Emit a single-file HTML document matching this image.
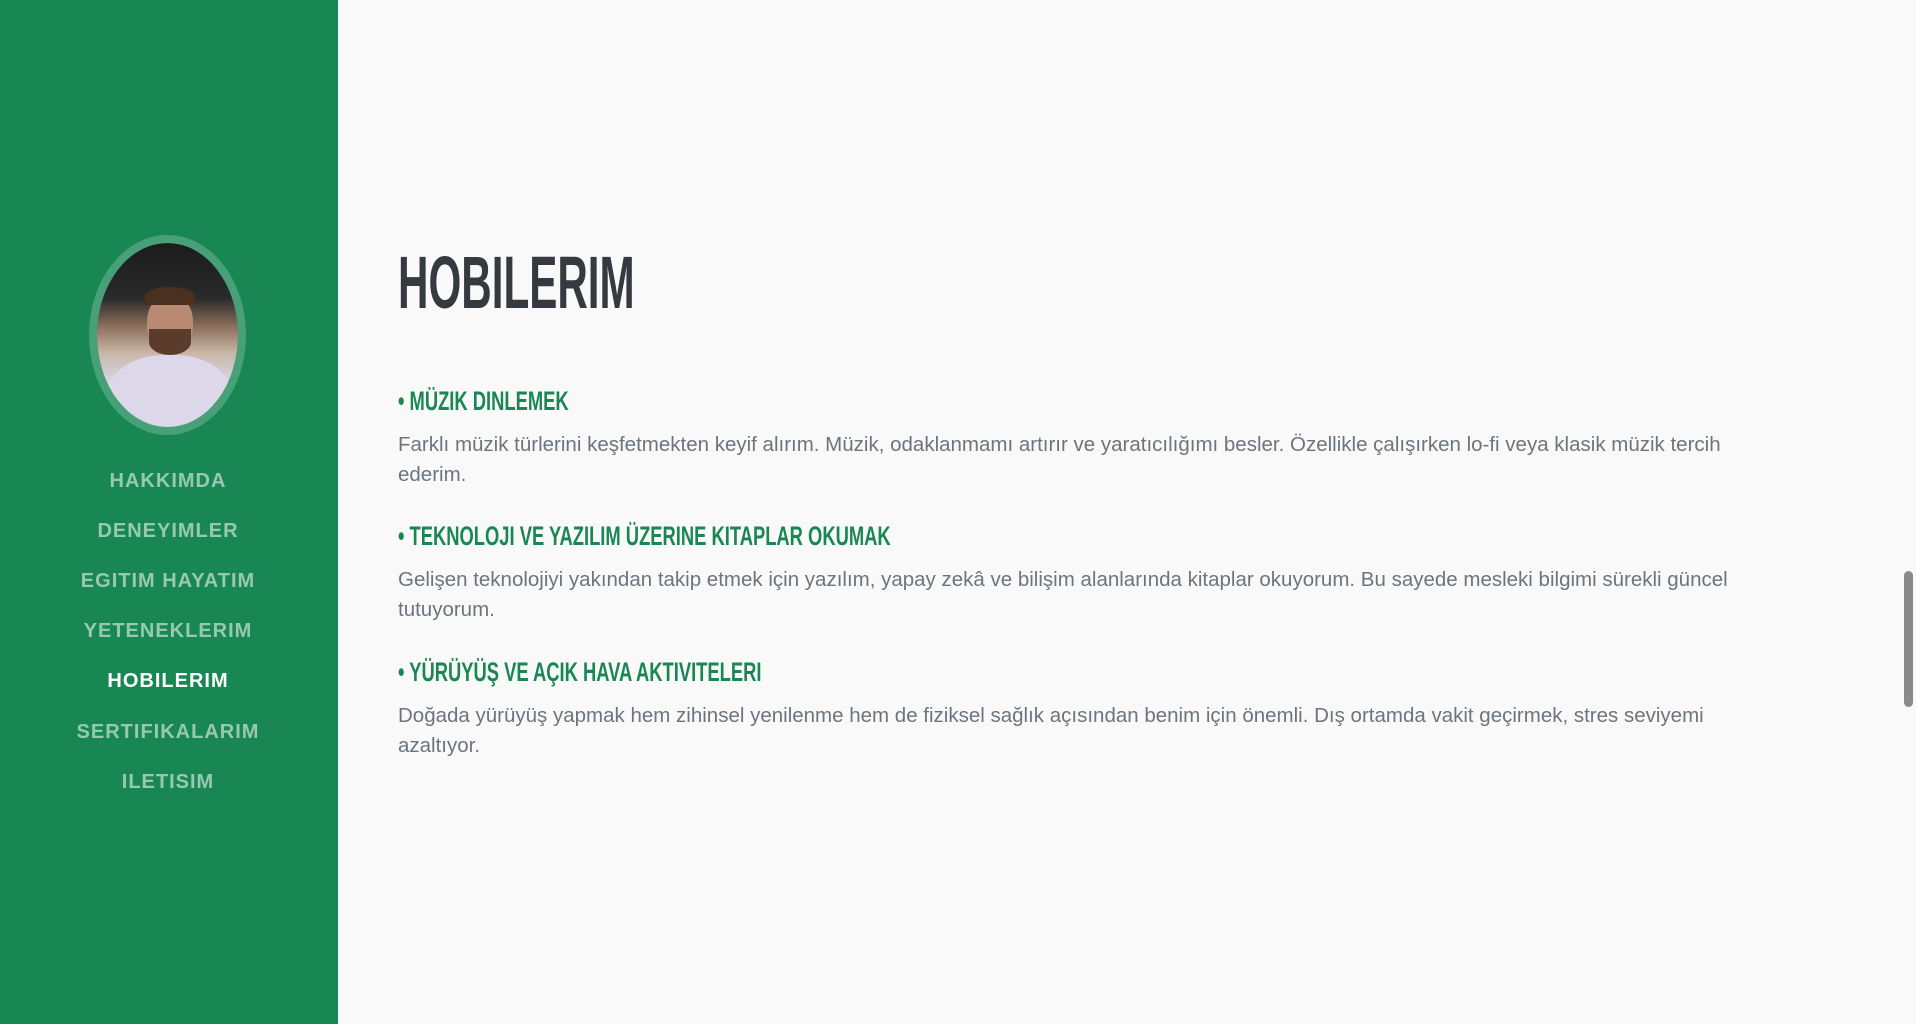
<!DOCTYPE html>
<html><head><meta charset="utf-8"><style>
html,body{margin:0;padding:0;width:1916px;height:1024px;overflow:hidden;background:#f9f9f9;font-family:"Liberation Sans",sans-serif}
.side{position:absolute;left:0;top:0;width:338px;height:1024px;background:#198754}
.ph{position:absolute;left:89px;top:235px;width:141px;height:184px;border:8px solid #47a077;border-radius:50%;overflow:hidden;background:linear-gradient(180deg,#1c1c1c 0%,#2a2a2a 30%,#8a6d5a 45%,#c9b8a8 60%,#d8d4e4 75%,#cfcfe0 100%);background-clip:padding-box}
.face{position:absolute;left:50px;top:52px;width:46px;height:58px;border-radius:45%;background:#b98a72}
.beard{position:absolute;left:52px;top:86px;width:42px;height:26px;border-radius:0 0 50% 50%;background:#5a3b2c}
.hair{position:absolute;left:48px;top:44px;width:50px;height:18px;border-radius:50% 50% 0 0;background:#4a3020}
.shirt{position:absolute;left:10px;top:112px;width:125px;height:90px;border-radius:45% 45% 0 0;background:#dcd8ea}
.nav{position:absolute;left:0;width:336px;text-align:center;font-weight:bold;font-size:20px;letter-spacing:1px;color:rgba(255,255,255,0.55)}
.nav.a{color:#fff}
.main{position:absolute;left:398px;top:0}
h1{position:absolute;left:0;top:240px;margin:0;font-size:74px;font-weight:bold;color:#343a40;transform:scaleX(0.57);transform-origin:left;white-space:nowrap;line-height:86px}
h3{position:absolute;left:0;margin:0;font-size:27px;font-weight:bold;color:#198754;transform:scaleX(0.68);transform-origin:left;white-space:nowrap;line-height:30px}
p{position:absolute;left:0;margin:0;font-size:20.5px;line-height:30px;color:#6c757d;white-space:nowrap}
.sb{position:absolute;right:0;top:0;width:16px;height:1024px;background:#f8f9fa}
.th{position:absolute;right:3px;top:571px;width:9px;height:136px;border-radius:5px;background:#8a8a8a}
</style></head><body>
<div class="side">
<div class="ph"><div class="shirt"></div><div class="face"></div><div class="hair"></div><div class="beard"></div></div>
<div class="nav" style="top:470px">HAKKIMDA</div>
<div class="nav" style="top:520px">DENEYIMLER</div>
<div class="nav" style="top:570px">EGITIM HAYATIM</div>
<div class="nav" style="top:620px">YETENEKLERIM</div>
<div class="nav a" style="top:670px">HOBILERIM</div>
<div class="nav" style="top:721px">SERTIFIKALARIM</div>
<div class="nav" style="top:771px">ILETISIM</div>
</div>
<div class="main">
<h1>HOBILERIM</h1>
<h3 style="top:386px">• MÜZIK DINLEMEK</h3>
<p style="top:430px">Farklı müzik türlerini keşfetmekten keyif alırım. Müzik, odaklanmamı artırır ve yaratıcılığımı besler. Özellikle çalışırken lo-fi veya klasik müzik tercih<br>ederim.</p>
<h3 style="top:521px">• TEKNOLOJI VE YAZILIM ÜZERINE KITAPLAR OKUMAK</h3>
<p style="top:565px">Gelişen teknolojiyi yakından takip etmek için yazılım, yapay zekâ ve bilişim alanlarında kitaplar okuyorum. Bu sayede mesleki bilgimi sürekli güncel<br>tutuyorum.</p>
<h3 style="top:657px">• YÜRÜYÜŞ VE AÇIK HAVA AKTIVITELERI</h3>
<p style="top:701px">Doğada yürüyüş yapmak hem zihinsel yenilenme hem de fiziksel sağlık açısından benim için önemli. Dış ortamda vakit geçirmek, stres seviyemi<br>azaltıyor.</p>
</div>
<div class="sb"><div class="th"></div></div>
</body></html>
